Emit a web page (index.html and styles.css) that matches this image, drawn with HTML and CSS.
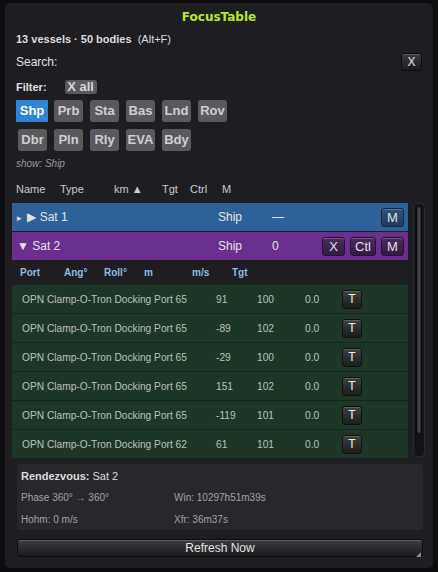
FILE: index.html
```html
<!DOCTYPE html>
<html lang="en">
<head>
    <meta charset="UTF-8">
    <title>FocusTable</title>
    <link rel="stylesheet" href="styles.css">
</head>
<body>
    <div class="panel">
        <div class="title">FocusTable</div>
        <div class="info"><b>13 vessels · 50 bodies</b> &nbsp;(Alt+F)</div>

        <div class="search">
            <span>Search:</span>
            <button class="btn-dark btn-x">X</button>
        </div>

        <div class="filter">
            <b>Filter:</b>
            <span class="chip-all">X all</span>
        </div>

        <div class="chips">
            <span class="chip active wide">Shp</span>
            <span class="chip">Prb</span>
            <span class="chip">Sta</span>
            <span class="chip">Bas</span>
            <span class="chip">Lnd</span>
            <span class="chip">Rov</span>
        </div>
        <div class="chips second">
            <span class="chip">Dbr</span>
            <span class="chip">Pln</span>
            <span class="chip">Rly</span>
            <span class="chip">EVA</span>
            <span class="chip">Bdy</span>
        </div>

        <div class="show">show: Ship</div>

        <div class="head">
            <span class="h-name">Name</span>
            <span class="h-type">Type</span>
            <span class="h-km">km ▲</span>
            <span class="h-tgt">Tgt</span>
            <span class="h-ctrl">Ctrl</span>
            <span>M</span>
        </div>

        <div class="table-area">
            <div class="rows">
                <div class="vessel sat1">
                    <span class="v-name"><small>▸</small> ▶ Sat 1</span>
                    <span class="v-type">Ship</span>
                    <span class="v-km">—</span>
                    <span class="v-btns"><button class="vbtn">M</button></span>
                </div>
                <div class="vessel sat2">
                    <span class="v-name">▼ Sat 2</span>
                    <span class="v-type">Ship</span>
                    <span class="v-km">0</span>
                    <span class="v-btns">
                        <button class="vbtn">X</button>
                        <button class="vbtn">Ctl</button>
                        <button class="vbtn">M</button>
                    </span>
                </div>

                <div class="subhead">
                    <span class="s-port">Port</span>
                    <span class="s-ang">Ang°</span>
                    <span class="s-roll">Roll°</span>
                    <span class="s-m">m</span>
                    <span class="s-ms">m/s</span>
                    <span>Tgt</span>
                </div>

                <div class="docks" id="docks"></div>
            </div>
            <div class="scrollbar"><div class="thumb"></div></div>
        </div>

        <div class="rendezvous">
            <div><b>Rendezvous:</b> Sat 2</div>
            <div class="rv-line"><span class="rv-left">Phase 360° → 360°</span><span>Win: 10297h51m39s</span></div>
            <div class="rv-line"><span class="rv-left">Hohm: 0 m/s</span><span>Xfr: 36m37s</span></div>
        </div>

        <button class="refresh">Refresh Now</button>
    </div>

    <script>
        // docking ports of Sat 2
        const ports = [
            ["OPN Clamp-O-Tron Docking Port 65", "91", "100", "0.0"],
            ["OPN Clamp-O-Tron Docking Port 65", "-89", "102", "0.0"],
            ["OPN Clamp-O-Tron Docking Port 65", "-29", "100", "0.0"],
            ["OPN Clamp-O-Tron Docking Port 65", "151", "102", "0.0"],
            ["OPN Clamp-O-Tron Docking Port 65", "-119", "101", "0.0"],
            ["OPN Clamp-O-Tron Docking Port 62", "61", "101", "0.0"]
        ];

        const docks = document.getElementById('docks');
        ports.forEach(p => {
            const row = document.createElement('div');
            row.className = 'dock';
            row.innerHTML = `
                <span class="d-name">${p[0]}</span>
                <span class="d-ang">${p[1]}</span>
                <span class="d-m">${p[2]}</span>
                <span class="d-ms">${p[3]}</span>
                <button class="tbtn">T</button>`;
            docks.appendChild(row);
        });
    </script>
</body>
</html>
```

FILE: styles.css
```css
body {
    margin: 0;
    background: #0d0d0f;
    font-family: "Liberation Sans", Arial, sans-serif;
    color: #d8d8d8;
}
button {
    font-family: "Liberation Sans", Arial, sans-serif;
    padding: 0;
    cursor: pointer;
}
.panel {
    width: 428px;
    height: 565px;
    margin: 3px 0 0 5px;
    background: #1e1e22;
    border-radius: 5px;
    box-sizing: border-box;
    display: flex;
    flex-direction: column;
}
.title {
    padding-top: 4px;
    line-height: 20px;
    text-align: center;
    font-family: "DejaVu Sans", sans-serif;
    font-weight: bold;
    font-size: 12px;
    color: #b6ea1e;
}
.info {
    margin: 5px 0 0 11px;
    line-height: 14px;
    font-size: 11px;
    color: #dcdcdc;
}
.search {
    margin: 6px 11px 0 11px;
    height: 20px;
    display: flex;
    align-items: center;
    justify-content: space-between;
    font-size: 12px;
    color: #e0e0e0;
}
.btn-dark {
    background: linear-gradient(#3a3a3d, #1c1c1f);
    border: 1px solid #0c0c0e;
    box-shadow: inset 0 1px 0 #5a5a5e;
    border-radius: 3px;
    color: #e6e6e6;
}
.btn-x {
    width: 21px;
    height: 18px;
    font-size: 12px;
}
.filter {
    margin: 8px 0 0 11px;
    height: 14px;
    display: flex;
    align-items: center;
    font-size: 11px;
    color: #e0e0e0;
}
.chip-all {
    margin-left: 18px;
    width: 32px;
    height: 14px;
    line-height: 14px;
    text-align: center;
    background: #5a5a5e;
    border-radius: 3px;
    font-weight: bold;
    font-size: 13px;
    color: #d6d6d6;
}
.chips {
    margin: 6px 0 0 11px;
    display: flex;
    gap: 7px;
}
.chips.second {
    margin: 7px 0 0 13px;
}
.chip {
    width: 29px;
    height: 22px;
    line-height: 22px;
    text-align: center;
    background: #5a5a5e;
    border-radius: 3px;
    font-weight: bold;
    font-size: 13px;
    color: #cfcfcf;
}
.chip.wide {
    width: 32px;
    margin-right: -1px;
}
.chip.active {
    background: #2f84d8;
    color: #ffffff;
    border-radius: 0;
}
.show {
    margin: 6px 0 0 11px;
    line-height: 14px;
    font-size: 10px;
    font-style: italic;
    color: #9a9a9a;
}
.head {
    margin: 11px 0 0 11px;
    line-height: 14px;
    display: flex;
    font-size: 11px;
    color: #cacaca;
}
.h-name { width: 44px; }
.h-type { width: 54px; }
.h-km { width: 48px; }
.h-tgt { width: 28px; }
.h-ctrl { width: 32px; }

.table-area {
    margin: 7px 0 0 7px;
    display: flex;
    gap: 5px;
}
.rows {
    width: 396px;
    display: flex;
    flex-direction: column;
}
.vessel {
    height: 28px;
    display: flex;
    align-items: center;
    font-size: 12px;
    color: #e4e4e4;
}
.vessel > span {
    flex-shrink: 0;
}
.vessel.sat1 {
    background: #2c6299;
}
.vessel.sat2 {
    margin-top: 1px;
    background: #6a2f8f;
}
.v-name {
    width: 201px;
    padding-left: 5px;
}
.v-name small {
    font-size: 9px;
    margin-right: 2px;
}
.v-type { width: 54px; }
.v-km { width: 40px; }
.v-btns {
    margin-left: auto;
    margin-right: 4px;
    display: flex;
    gap: 5px;
}
.vbtn {
    height: 19px;
    min-width: 23px;
    padding: 0 4px;
    border-radius: 3px;
    font-size: 13px;
    color: #e2e2e2;
}
.sat1 .vbtn {
    background: linear-gradient(#2f5378, #1f3b58);
    border: 1px solid #16283c;
    box-shadow: inset 0 1px 0 #55789e;
}
.sat2 .vbtn {
    background: linear-gradient(#4a2c5e, #321c42);
    border: 1px solid #24142f;
    box-shadow: inset 0 1px 0 #7a5690;
}
.subhead {
    margin-top: 1px;
    height: 22px;
    display: flex;
    align-items: center;
    padding-left: 8px;
    font-size: 10px;
    font-weight: bold;
    color: #92bae2;
}
.s-port { width: 44px; }
.s-ang { width: 40px; }
.s-roll { width: 40px; }
.s-m { width: 48px; }
.s-ms { width: 40px; }
.docks {
    margin-top: 1px;
    padding-top: 1px;
    display: flex;
    flex-direction: column;
    gap: 1px;
    background: #16261c;
}
.dock {
    height: 28px;
    display: flex;
    align-items: center;
    padding-left: 10px;
    background: #1e3628;
    font-size: 10.2px;
    color: #bcc0bc;
}
.d-name { width: 194px; }
.d-ang { width: 41px; }
.d-m { width: 48px; }
.d-ms { width: 37px; }
.tbtn {
    width: 20px;
    height: 19px;
    border-radius: 3px;
    background: linear-gradient(#3d403d, #1b1d1b);
    border: 1px solid #0e100e;
    box-shadow: inset 0 1px 0 #5e625e;
    font-size: 12px;
    color: #f0f0f0;
}
.scrollbar {
    width: 12px;
    height: 254px;
    box-sizing: border-box;
    padding: 2px;
    background: #141416;
    border: 1px solid #2a2a2e;
    border-radius: 4px;
}
.thumb {
    height: 228px;
    border-radius: 3px;
    background: linear-gradient(90deg, #26262a, #4a4a4e 50%, #26262a);
    border: 1px solid #0a0a0c;
    box-sizing: border-box;
}
.rendezvous {
    margin: 6px 10px 0 12px;
    height: 66px;
    box-sizing: border-box;
    padding: 5px 4px 0 4px;
    background: #28282c;
    border-radius: 4px;
    font-size: 11px;
    line-height: 14px;
    color: #dcdcdc;
}
.rv-line {
    margin-top: 8px;
    display: flex;
    font-size: 10px;
    color: #a2a2a2;
}
.rv-left { width: 153px; }
.refresh {
    position: relative;
    margin: 9px 10px 0 12px;
    height: 18px;
    background: linear-gradient(#3c3c3f, #1a1a1d);
    border: 1px solid #0c0c0e;
    box-shadow: inset 0 1px 0 #606064;
    border-radius: 3px;
    font-size: 12px;
    color: #e4e4e4;
}
.refresh::after {
    content: "";
    position: absolute;
    right: 1px;
    bottom: -1px;
    border-left: 5px solid transparent;
    border-bottom: 5px solid #8a8a8e;
}
```
